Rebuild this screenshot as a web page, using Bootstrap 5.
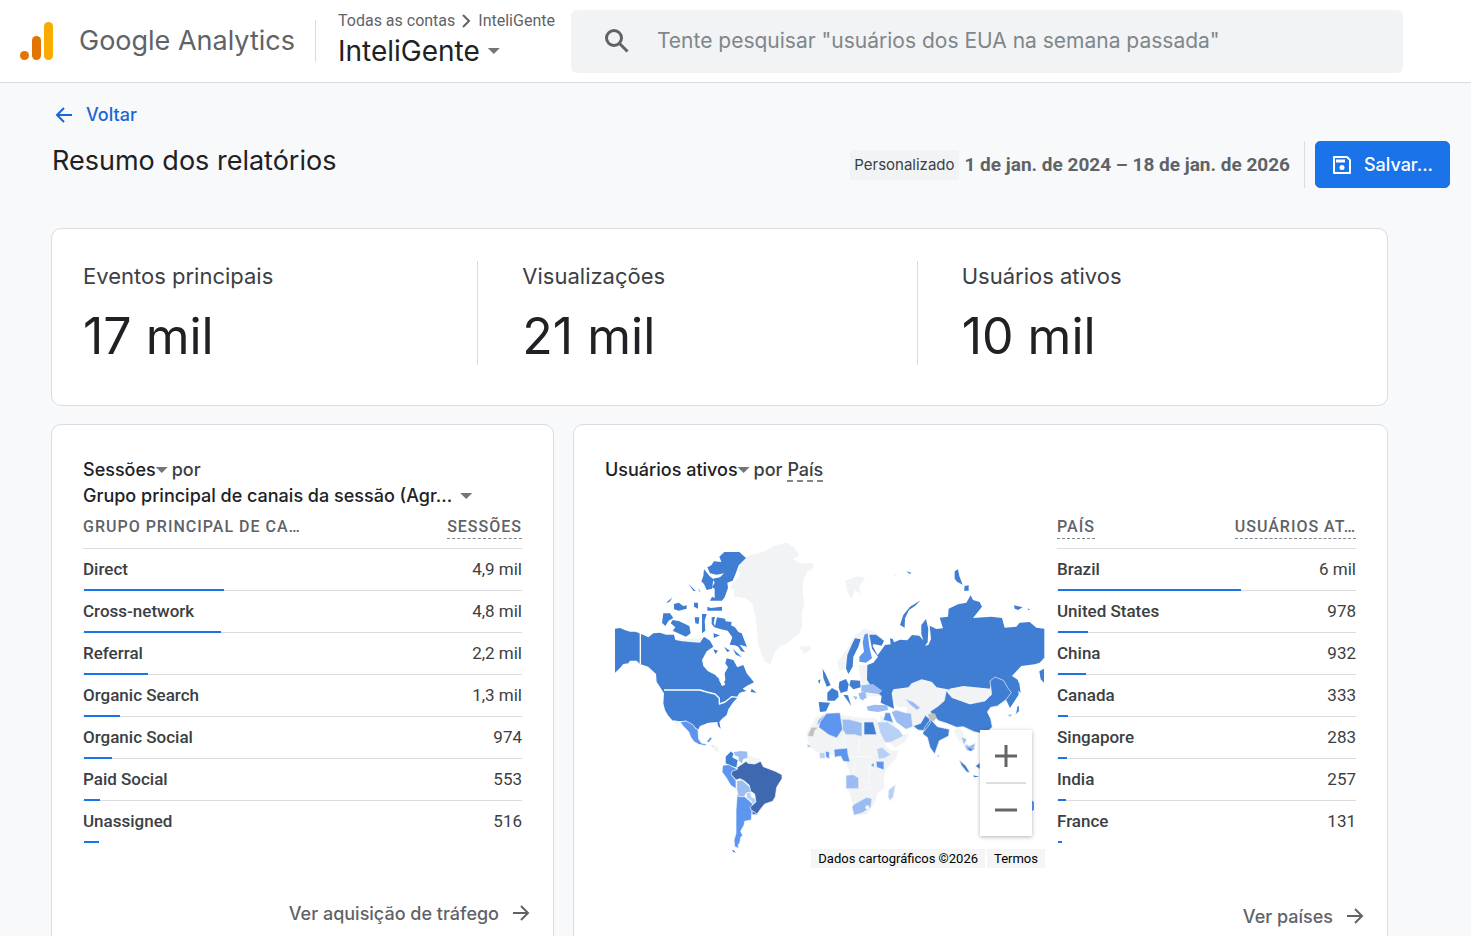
<!DOCTYPE html>
<html lang="pt-BR">
<head>
<meta charset="utf-8">
<meta name="viewport" content="width=device-width, initial-scale=1">
<title>Google Analytics</title>
<link href="https://cdn.jsdelivr.net/npm/bootstrap@5.3.0/dist/css/bootstrap.min.css" rel="stylesheet">
<style>
:root{--ink:#202124;--ink-2:#3c4043;--muted:#5f6368;--line:#dadce0;--blue:#1a73e8;--display:Inter,Roboto,sans-serif}
body{font-family:Roboto,sans-serif;font-size:16px;background:#f8f9fb;color:var(--ink-2)}
svg{display:block;flex:none}
.display{font-family:var(--display)}
.topbar{height:83px;background:#fff;border-bottom:1px solid var(--line);padding:0 68px 0 20px}
.brand-name{font-size:27px;line-height:40px;color:var(--muted);margin-left:26px}
.brand-sep{width:1px;height:42px;background:var(--line);margin:0 22px 0 20px}
.crumbs{font-size:16px;line-height:20px;color:var(--muted);gap:7px;white-space:nowrap}
.crumbs a{color:inherit;text-decoration:none}
.plain{border:0;background:none;padding:0;color:var(--ink);text-align:left;font-weight:inherit}
.property{font-size:28px;line-height:40px}
.searchbox{height:63px;background:#f1f3f4;border-radius:6px;margin-left:16px;padding:0 32px;gap:24px}
.searchbox input{border:0;background:none;outline:0;font-family:var(--display);font-size:21px;color:var(--ink)}
.searchbox input::placeholder{color:#80868b;opacity:1}
.page{padding:17px 21px 0 51px}
.back{font-size:18px;line-height:30px;color:#1967d2;font-weight:500;gap:12px;padding-left:3px}
.title-row{min-height:98px;padding-top:11px}
.page-title{font-size:27px;line-height:40px;color:var(--ink);margin:0;padding-left:1px}
.chip{font-size:15px;line-height:30px;background:#f1f3f4;border-radius:3px;padding:0 4px;color:var(--ink-2)}
.dates{font-size:19px;line-height:26px;font-weight:700;color:var(--muted);margin-left:6px}
.vline{width:1px;background:var(--line);margin:0 10px 0 14px}
.btn-save{--bs-btn-bg:#1a73e8;--bs-btn-border-color:#1a73e8;width:135px;height:47px;border-radius:5px;font-size:18px;font-weight:500;padding:0;gap:12px}
.panels{margin-right:62px}
.panel{background:#fff;border:1px solid var(--line);border-radius:10px}
.kpis{padding:32px 31px 40px}
.kpi{height:104px}
.kpi + .kpi{border-left:1px solid var(--line);padding-left:44px}
.kpi h2{font-size:22px;line-height:30px;font-weight:400;margin:0;color:var(--ink-2)}
.kpi p{font-size:50px;line-height:60px;margin:15px 0 0;color:var(--ink)}
.two{display:grid;grid-template-columns:503fr 815fr;gap:19px;margin-top:18px}
.report{padding:32px 31px 24px;min-width:0}
.report-title{font-size:18px;line-height:26px;min-height:52px;font-weight:500;margin:0}
.dash{border-bottom:2px dashed #80868b}
.caret{width:12px;height:6px;background:#757575;clip-path:polygon(0 0,100% 0,50% 100%)}
.map-grid{display:grid;grid-template-columns:440fr 299fr;gap:12px;align-items:start}
.map-box{padding:21px 0 0 10px;height:337px}
.map-box svg.world{width:100%;height:auto}
.data{width:100%;table-layout:fixed;border-collapse:separate;border-spacing:0}
.data th,.data td{padding:0;border-bottom:1px solid var(--line)}
.data thead th{height:40px;padding-bottom:4px;font-weight:500;font-size:16px;letter-spacing:1px;color:var(--muted);white-space:nowrap;text-transform:uppercase}
.data thead span{display:inline-block;line-height:22px;vertical-align:middle}
.data thead .tip{border-bottom:1px dashed #80868b}
.data tbody tr{position:relative}
.data tbody th,.data tbody td{height:42px;padding-bottom:2px;font-size:17px;line-height:24px}
.data tbody th{font-weight:500}
.data tbody tr:last-child > *{border-color:transparent}
.bar{position:absolute;left:1px;bottom:0;height:2px;background:var(--blue)}
.more{font-size:18px;line-height:26px;font-weight:500;color:var(--muted);text-decoration:none;gap:12px;margin:58px -9px 0 0}
.zoomer{position:absolute;right:13px;top:221px;width:52px;height:106px;background:#fff;box-shadow:0 1px 4px rgba(0,0,0,.3)}
.zoomer button{display:block;width:52px;height:52px;border:0;background:none;padding:0}
.zoomer hr{margin:0 6px;border-top:2px solid #ddd;opacity:1}
.credits{position:absolute;right:0;top:340px;gap:2px;font-size:13px;line-height:18px;color:#000}
.credits > *{background:#f5f5f5;padding:1px 7px 0;color:#000;text-decoration:none}
.w1{fill:#407ed4}.w2{fill:#5e96ef}.w3{fill:#9bbcf3}.w4{fill:#b7d0f6}.w0{fill:#f1f3f4}.w5{fill:#3e69b1}.wg{fill:#c0c0c0}
</style>
</head>
<body>
<header class="topbar d-flex align-items-center">
  <svg width="33" height="38" viewBox="0 0 33 38" aria-hidden="true"><rect x="24" width="9" height="38" rx="4.5" fill="#f9ab00"/><rect x="12" y="14" width="9" height="24" rx="4.5" fill="#e37400"/><circle cx="4.5" cy="33.500" r="4.500" fill="#e37400"/></svg>
  <span class="brand-name display text-nowrap">Google Analytics</span>
  <span class="brand-sep"></span>
  <div>
    <nav class="crumbs d-flex align-items-center" aria-label="Conta">
      <a href="#">Todas as contas</a>
      <svg width="9" height="14" viewBox="0 0 9 14" fill="none" stroke="#5f6368" stroke-width="2"><path d="M1 1l6 6-6 6"/></svg>
      <a href="#">InteliGente</a>
    </nav>
    <button class="plain property display d-flex align-items-center gap-2" type="button">InteliGente<span class="caret"></span></button>
  </div>
  <label class="searchbox d-flex align-items-center flex-grow-1">
    <svg width="28" height="28" viewBox="0 0 28 28" fill="none" stroke="#5f6368" stroke-width="3"><circle cx="11" cy="11" r="7.500"/><path d="M16.500 16.500l8 8"/></svg>
    <input class="flex-grow-1" type="search" aria-label="Pesquisar" placeholder='Tente pesquisar "usuários dos EUA na semana passada"'>
  </label>
</header>

<main class="page">
  <button class="plain back display d-flex align-items-center" type="button">
    <svg width="20" height="20" viewBox="0 0 20 20" fill="none" stroke="#1967d2" stroke-width="2"><path d="M18 10H3M10 3l-7 7 7 7"/></svg>Voltar</button>
  <div class="title-row d-flex justify-content-between align-items-start">
    <h1 class="page-title display fw-normal">Resumo dos relatórios</h1>
    <div class="d-flex align-items-center">
      <span class="chip display">Personalizado</span>
      <span class="dates">1 de jan. de 2024 – 18 de jan. de 2026</span>
      <span class="vline align-self-stretch"></span>
      <button class="btn btn-primary btn-save display d-flex align-items-center justify-content-center" type="button">
        <svg width="20" height="20" viewBox="0 0 20 20" fill="none" stroke="#fff" stroke-width="2"><path d="M2 2h13l3 3v13H2z" stroke-linejoin="round"/><path d="M4 6h9" stroke-width="3"/><circle cx="10" cy="12.500" r="2.500" fill="#fff" stroke="none"/></svg>Salvar...</button>
    </div>
  </div>

  <div class="panels">
    <section class="panel kpis">
      <div class="row g-0">
        <div class="kpi col"><h2 class="display">Eventos principais</h2><p class="display">17 mil</p></div>
        <div class="kpi col"><h2 class="display">Visualizações</h2><p class="display">21 mil</p></div>
        <div class="kpi col"><h2 class="display">Usuários ativos</h2><p class="display">10 mil</p></div>
      </div>
    </section>

    <div class="two">
      <section class="panel report">
        <div class="report-title display">
          <div class="d-flex align-items-center"><button type="button" class="plain d-flex align-items-center">Sessões<span class="caret"></span></button><span class="ms-1">por</span></div>
          <button type="button" class="plain d-flex align-items-center gap-2 text-nowrap">Grupo principal de canais da sessão (Agr...<span class="caret"></span></button>
        </div>
        <table class="data">
          <thead><tr><th style="width:60%"><span>Grupo principal de ca…</span></th><th class="text-end"><span class="tip">Sessões</span></th></tr></thead>
          <tbody>
            <tr><th>Direct<i class="bar" style="width:32%"></i></th><td class="text-end">4,9 mil</td></tr>
            <tr><th>Cross-network<i class="bar" style="width:31.3%"></i></th><td class="text-end">4,8 mil</td></tr>
            <tr><th>Referral<i class="bar" style="width:14.6%"></i></th><td class="text-end">2,2 mil</td></tr>
            <tr><th>Organic Search<i class="bar" style="width:8.3%"></i></th><td class="text-end">1,3 mil</td></tr>
            <tr><th>Organic Social<i class="bar" style="width:6.4%"></i></th><td class="text-end">974</td></tr>
            <tr><th>Paid Social<i class="bar" style="width:3.7%"></i></th><td class="text-end">553</td></tr>
            <tr><th>Unassigned<i class="bar" style="width:3.4%"></i></th><td class="text-end">516</td></tr>
          </tbody>
        </table>
        <a href="#" class="more display d-flex align-items-center justify-content-end">Ver aquisição de tráfego
          <svg width="20" height="20" viewBox="0 0 20 20" fill="none" stroke="#5f6368" stroke-width="2"><path d="M2 9h15M10 2l7 7-7 7"/></svg></a>
      </section>

      <section class="panel report">
        <div class="report-title display d-flex align-items-start"><button type="button" class="plain d-flex align-items-center">Usuários ativos<span class="caret"></span></button><span class="ms-1">por <span class="dash">País</span></span></div>
        <div class="map-grid">
          <div class="map-box position-relative">
            <svg class="world" viewBox="45 0 1290 1000" role="img" aria-label="Usuários ativos por país" stroke-linejoin="round">
              <!-- North America and Greenland -->
              <path class="w0" d="M500 60l30-15 30-7 20 12 18 25-18 13 20 12 40 0-20 30-10 20-2 40 5 30-8 30 2 38-9 22-18 14-20 18-15 4-20 18-13 39-17-8-10-20-10-30-5-50-3-30-10-45-20-15-35-5 0-20-12-10 30-32-5-35 25-25 50-12zM598 350l34-2 0 12-20 12zM105 392l30 0 25 40 20 30-15-22-25-30zM222 328l90-4 0 20-62-5z"/>
              <path class="w1" d="M45 296l15-2 14 6 16 5 16 0 18 7 21 10 15-12 20-2 18 6 24 0 4 16 20 4 24 2 30 2 12-18 18 12 10 18-20 14-14 26 4 18 14 16 21 10 13 14 8 18 10-16-2-20 10-18-8-12 4-15 20 5 12 22 18-7 10 25 22 27L440 468 428 476 440 484 425 486 415 500 400 516 385 538 380 555 366 566 358 576 362 596 354 588 352 576 325 578 300 588 294 600 283 590 270 582 258 572 240 574 218 572 204 556 195 540 190 520 192 490 178 468 170 456 168 432 145 410 120 402 110 392 90 392 85 400 70 402 60 414 45 428z"/>
              <path class="w1" d="M358 80l15-14 45 0 20 18-22 22-8 22-10 24-16 6 2 16-10 28-8 10-36 0 6-12 8 4 0-14 0-14-8-4 8-14-6-12 22-4 12-12-22 4-20-4-8-18 12-6 8-12 22 2zM312 118l12 14 4 6 12 10-4 28-16 4-8-18-8-8 6-16zM322 230l10 4 34-4 0 12-44 0zM282 218l12 0 0 18-12-6zM222 222l14-4 14 10 10-2 0 10-24 6-14-4zM198 218l20-16-10 14zM190 250l20 0 10 14-14 8-10 16-10-10zM218 270l20 4 30 14 4 22-14 10-10-4-30-14 8-10-14-12zM284 262l14 0-2 20-10-2zM306 252l14 0-6 20 2 30-10 8zM266 162l22 22-8-2zM294 174l8 12-4-2zM335 262l10-2-4 20 4 8 6-26 24 4 2 8 18 2-2 10 12 6 10 14 10 4 10 26 6 14-22-6 16 22-12-2-8-14-10-4-16-2 8-22-14-20-20-4-20-6-8-10zM340 310l20 6-18 8zM340 358l14 4-8 10zM372 350l18 12-8 4zM398 356l28 26-18-8zM455 476l15 12-18-2z"/>
              <path d="M121 308v94M192 480h108l20 6 25 6 13 13v17l17-6 20-16 17 2 8-12 30-6" fill="none" stroke="#fff" stroke-width="4"/>
              <path d="M356 448l14 2 6 14-10 4z" fill="#fff"/>
              <!-- Central and South America -->
              <g transform="translate(0 450)" stroke="#fff" stroke-width="2">
                <path class="w0" d="M220 122l12 2 10 18-10-4zM340 196l14 4 4 20-12-6-12-16zM445 225l36 12 0 12-40 2z"/>
                <path class="w2" d="M240 126l18-3 12 6 10 6 6 10 8 4 2 28 8 12 16 4-4 4-20-4-14-8-10-14-6-16-14-14z"/>
                <path class="w2" d="M320 184l12-14 4 6-10 12z"/>
                <path class="w3" d="M332 196l12 0-4 6z"/>
                <path class="w1" d="M392 214l10 6-4 12 16 8-4 24-20-6-14-8 0-20zM456 380l16 10 0 14-16 0z"/>
                <path class="w3" d="M400 216l20-4 22 2 2 20-14 4-4 14-10-10-2-12-10-2zM410 302l16-2 16 14 12 10 4 12-20 4-6 12-18 2-4-20z"/>
                <path class="w2" d="M368 256l18-2 24 12 4 10-18 10 12 16 0 24-16-10-14-24-12-16z"/>
                <path class="w2" d="M410 330l6 20 18 0 30 26-8 14-2 30-20 4-2 12-10 18 6 12-6 6-2 14-6 12 4 8-14-6-2-20 6-20 0-70 4-50z"/>
                <path class="w4" d="M438 340l14-4 2 14 14 6 0 16-10 4-4-12-14-10z"/>
                <path class="w5" d="M412 262l26-18 6 6 20 2 18-8 8 16 36 14 20 10 0 12-16 26-4 28-8 14-24 8-16 20-6 10-18-12-4-8 18-16-4-24-12-8-4-18-16-14-12-6-12 4-14-16 2-10 16-6z"/>
                <path d="M408 340l-8 70-4 70 8 28" fill="none" stroke="#fff" stroke-width="3"/>
                <path class="w1" d="M396 510l4 0 8 8-8-2z" stroke="none"/>
              </g>
              <!-- Russia and Northern Europe -->
              <g transform="translate(630 0)">
                <path class="w0" d="M82 395l28-35 20-40 35-25 32 12 20 20-80 0-25 90-25 5zM106 152l38-14 22 6-18 24 4 24-18-12-8 28-14-22zM250 134l12-4-8 10zM145 405l25 0 20 34 30 20 0 40-60 0zM0 98l10 4-4 18-8 2zM250 470l50-15 10-8 30-8 40 24 46 8 40-8 40 8 60 0 0 60-300 0-30-20z"/>
                <path class="w1" d="M172 405l18-7 14-18-18-24-8-42 20 0 24 18-7 15-25-5-2 6 15 28 22-31 17-2-2-18 8 2 4 10 18-8 22 2 14-16 22 2 12 14-6-18 0-28 14-18 7 30-2 40-8 10 10-2 8-18-4-40 20 10 20-2-10-32 25-3 2-24 28-13 25-5 13-22 7 14 20 6 7 14-27 34 55-4 32 4 8 29 35-3 10-12 30-2 20 17 24 3v87l-14 15-15 5-40 5-28 30 18 12 2 44-26 40-30-62-15-10-15 8v15l-40-5-40-8-35 8-45-8-15-17-30-7-30 12-10 12-45 6-5 12 7 46-40-18 3-20-22-16-22-32z"/>
                <path class="w1" d="M112 375l13-30 10-20 17 3-7 22-15 30-2 30-13 22-7-17zM270 285l10-30 20-25 32-19-17 17-18 12-12 25-1 28zM434 124l10-6 4 20 10 26-16-8-8-10zM464 168l12-2 0 16-14 0zM612 226l26 6-14 8-10-4zM288 124l16 4-4 4zM652 234l8 5-4 2zM688 424l14-8v42l-10-10zM620 450l4 30 8 10-4-30zM38 416l10 18 14 32-12 4-10-26zM24 452l8-4-4 14zM88 455l20-8 8 16-4 20-20 6-6-16zM122 450l28 2 2 20-22 6-12-12z"/>
                <path class="w2" d="M163 314l10-4 5 40 8 35-18 13-20-3v-15l14-15-4-28z"/>
                <path class="w3" d="M155 466l34-4 28 20-10 10-30-4-24-4zM146 490l20-6 4 20-20 4z"/>
              </g>
              <!-- Europe south, Africa and Asia -->
              <g transform="translate(570 450)">
                <path class="w1" d="M112 38l14-14 18 10 2 16-12 12-22 0zM86 66l34 2-12 26-18 2zM160 44l24 34-6-18-4-14z"/>
                <path class="w3" d="M205 42l16-6 8 16-12 10zM230 80l22-6 40 2 2 14-30 6-30-4zM188 48l14 2-4 10z"/>
                <path class="w0" d="M78 112l30-14 110 16 40 0 28 80 18 20 22-4-8 26-30 34-6 16 0 40-20 14-4 20-26 42-28 4-14-30-16-50 4-50-12-34-4-18-50 2-36-12-20-22-6-32zM270 105l40 20 20 40 28-4-14 26-28 16-24-20-20-50zM350 76l50-6 40 10-10 44-60 24-20-30zM490 150l18-8 14 20-8 30-14-20z"/>
                <g stroke="#f1f3f4" stroke-width="2">
                  <path class="wg" d="M52 168l12-26 22 0-12 10-4 18z"/>
                  <path class="w3" d="M104 104l6 12-30 20 4-16zM156 118l20 0 40 10v42l-22-6-26 0-10-14zM304 96l14-6 28 8 18 2 4 40-20 8-30-22zM346 56l24 10 22 18-12 6-20-16zM168 286l22-2 16 10 0 32-38 0zM190 374l40-22 16 4-4 26-24 16-26 8-6-24z"/>
                  <path class="w2" d="M90 126l20-26 40-2 8 50-18 26-24-10-30-22zM286 98l14 0 10 30-30-8zM132 208l40-4 2 18 6 24-20-2-8-16-18 4zM258 244l24 0 0 26-22-8zM242 256l10-8 0 14zM106 214l12 2 0 20-10-4z"/>
                  <path class="w1" d="M222 126l28 0 10 38-38 0zM370 138l22-8 14-24 12 10 4 12-18 24-20-2zM404 142l18-24 20 22 36 8-2 20-28 14-14 40-14-20-8-30-14-10zM508 240l20 18 12 20-10-2-16-20zM556 258l14-10 0 20z"/>
                  <path class="w4" d="M262 126l30 0 36 24 12 18-36 18-18 2-16-30zM260 206l16-4 26 22-16 10-20 4zM296 330l20-16-6 36-10 12-6-12zM88 218l16 0 2 16-16 2z"/>
                  <path class="w3" d="M514 170l16 8-8 18 10 4 24-10-4 20-14 0-14-8zM52 192l14 8-14 2z"/>
                </g>
                <path class="w2" d="M724 360l8 6 0 22-8 8z"/>
                <path class="w1" d="M420 95l25-17 18-16 6-30 16 20 55 20 45-9 20-20-5-40 15-12 25 10 15 25 9 12-17 22-25 18-20 4-10 14 10 20 5 25-15 14-20 5-20-5-32-15-20 2-30-12-24-8z" stroke="#f1f3f4" stroke-width="2"/>
                <path class="w0" d="M478 26l42-8 82 8 2 20-26 16-38 10-52-18z"/>
                <path class="wg" d="M414 102l20-2 6 12-8 12-14-6z"/>
                <path class="w3" d="M680 90l6-14 2 18-12 10zM652 106l14-4-4 8zM528 192l12 10 14 4-10 8-14-4zM444 224l4 6-6 0z"/>
                <path class="w1" d="M532 204l14 2-4 8zM550 286l18 4-16 2zM682 80l4-2 0 14-6 8z"/>
                <path d="M120 174l40 30M160 174l8 30M210 170l-6 60M180 230l60 0M196 240l-6 40M240 250l-4 60M206 300l40 10M214 330l30-10" stroke="#fff" stroke-width="2" fill="none"/>
                <circle cx="232" cy="382" r="6" fill="#f8f8f8"/>
              </g>
            </svg>
            <div class="zoomer">
              <button type="button" aria-label="Aumentar o zoom"><svg class="mx-auto" width="22" height="22" viewBox="0 0 22 22" stroke="#666" stroke-width="3"><path d="M11 0v22M0 11h22"/></svg></button>
              <hr>
              <button type="button" aria-label="Diminuir o zoom"><svg class="mx-auto" width="22" height="22" viewBox="0 0 22 22" stroke="#666" stroke-width="3"><path d="M0 11h22"/></svg></button>
            </div>
            <div class="credits d-flex text-nowrap"><span>Dados cartográficos ©2026</span><a href="#">Termos</a></div>
          </div>
          <table class="data">
            <thead><tr><th><span class="tip">País</span></th><th class="text-end" style="width:60%"><span class="tip">Usuários at…</span></th></tr></thead>
            <tbody>
              <tr><th>Brazil<i class="bar" style="width:61.2%"></i></th><td class="text-end">6 mil</td></tr>
              <tr><th>United States<i class="bar" style="width:10%"></i></th><td class="text-end">978</td></tr>
              <tr><th>China<i class="bar" style="width:9.4%"></i></th><td class="text-end">932</td></tr>
              <tr><th>Canada<i class="bar" style="width:3.4%"></i></th><td class="text-end">333</td></tr>
              <tr><th>Singapore<i class="bar" style="width:3%"></i></th><td class="text-end">283</td></tr>
              <tr><th>India<i class="bar" style="width:2.7%"></i></th><td class="text-end">257</td></tr>
              <tr><th>France<i class="bar" style="width:1.4%"></i></th><td class="text-end">131</td></tr>
            </tbody>
          </table>
        </div>
        <a href="#" class="more display d-flex align-items-center justify-content-end">Ver países
          <svg width="20" height="20" viewBox="0 0 20 20" fill="none" stroke="#5f6368" stroke-width="2"><path d="M2 9h15M10 2l7 7-7 7"/></svg></a>
      </section>
    </div>
  </div>
</main>
<script src="https://cdn.jsdelivr.net/npm/bootstrap@5.3.0/dist/js/bootstrap.bundle.min.js"></script>
</body>
</html>
